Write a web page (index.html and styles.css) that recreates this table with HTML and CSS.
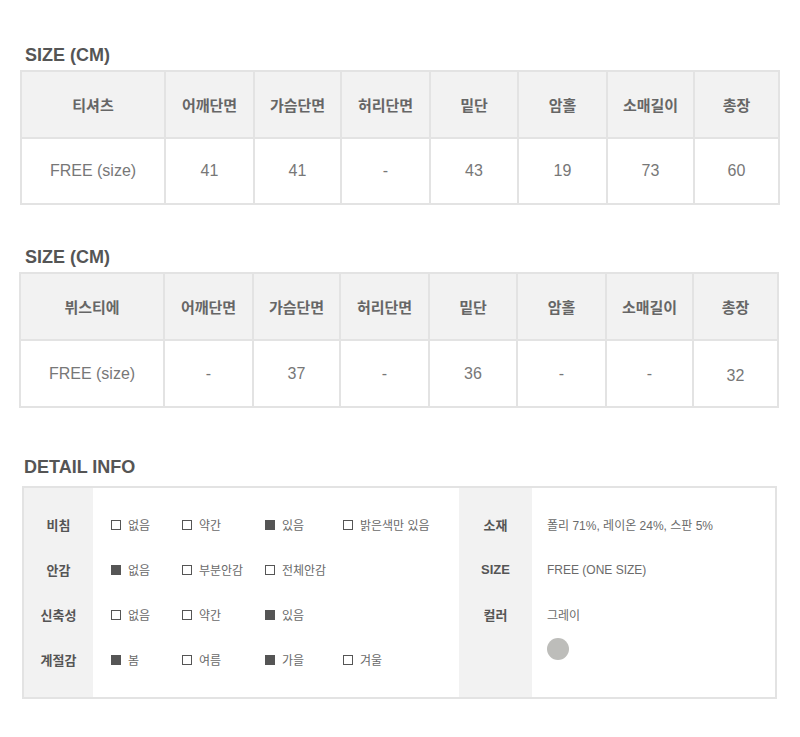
FILE: index.html
```html
<!DOCTYPE html>
<html lang="ko">
<head>
<meta charset="utf-8">
<link rel="stylesheet" href="styles.css">
</head>
<body>
<div class="page">
  <section class="size-block first">
    <h2 class="title">SIZE (CM)</h2>
    <table class="size-table">
      <colgroup>
        <col class="c-name"><col class="c89"><col class="c87"><col class="c89"><col class="c88"><col class="c89"><col class="c87"><col>
      </colgroup>
      <tr class="head">
        <th>티셔츠</th><th>어깨단면</th><th>가슴단면</th><th>허리단면</th><th>밑단</th><th>암홀</th><th>소매길이</th><th>총장</th>
      </tr>
      <tr class="body">
        <td>FREE (size)</td><td>41</td><td>41</td><td>-</td><td>43</td><td>19</td><td>73</td><td>60</td>
      </tr>
    </table>
  </section>

  <section class="size-block second">
    <h2 class="title">SIZE (CM)</h2>
    <table class="size-table">
      <colgroup>
        <col class="c-name"><col class="c89"><col class="c87"><col class="c89"><col class="c88"><col class="c89"><col class="c87"><col>
      </colgroup>
      <tr class="head">
        <th>뷔스티에</th><th>어깨단면</th><th>가슴단면</th><th>허리단면</th><th>밑단</th><th>암홀</th><th>소매길이</th><th>총장</th>
      </tr>
      <tr class="body">
        <td>FREE (size)</td><td>-</td><td>37</td><td>-</td><td>36</td><td>-</td><td>-</td><td class="low">32</td>
      </tr>
    </table>
  </section>

  <section class="detail">
    <h2 class="title">DETAIL INFO</h2>
    <div class="detail-box">
      <div class="labels">
        <div class="row">비침</div>
        <div class="row">안감</div>
        <div class="row">신축성</div>
        <div class="row">계절감</div>
      </div>
      <div class="options">
        <div class="row opts">
          <span class="opt"><i class="box"></i>없음</span>
          <span class="opt"><i class="box"></i>약간</span>
          <span class="opt"><i class="box on"></i>있음</span>
          <span class="opt"><i class="box"></i>밝은색만 있음</span>
        </div>
        <div class="row opts">
          <span class="opt"><i class="box on"></i>없음</span>
          <span class="opt"><i class="box"></i>부분안감</span>
          <span class="opt"><i class="box"></i>전체안감</span>
        </div>
        <div class="row opts">
          <span class="opt"><i class="box"></i>없음</span>
          <span class="opt"><i class="box"></i>약간</span>
          <span class="opt"><i class="box on"></i>있음</span>
        </div>
        <div class="row opts">
          <span class="opt"><i class="box on"></i>봄</span>
          <span class="opt"><i class="box"></i>여름</span>
          <span class="opt"><i class="box on"></i>가을</span>
          <span class="opt"><i class="box"></i>겨울</span>
        </div>
      </div>
      <div class="labels">
        <div class="row">소재</div>
        <div class="row latin">SIZE</div>
        <div class="row">컬러</div>
      </div>
      <div class="values">
        <div class="row">폴리 71%, 레이온 24%, 스판 5%</div>
        <div class="row">FREE (ONE SIZE)</div>
        <div class="row">그레이</div>
        <div class="swatch-row"><span class="swatch"></span></div>
      </div>
    </div>
  </section>
</div>
</body>
</html>
```

FILE: styles.css
```css
* { box-sizing: border-box; }
html, body {
  margin: 0;
  background: #fff;
}
body {
  font-family: "Liberation Sans", "Noto Sans CJK KR", sans-serif;
  color: #777;
}
.page {
  padding: 45px 20px 0 20px;
}
.title {
  margin: 0;
  font-size: 18px;
  line-height: 20px;
  font-weight: bold;
  color: #555;
  padding-left: 5px;
}
.size-block .title { margin-bottom: 5px; }
.size-block.second { margin-top: 42px; }
.size-block.second .title { margin-bottom: 5px; }
.size-block.second .size-table { margin-left: -1px; }
.size-block.second .size-table td { height: 67px; }

.size-table {
  width: 760px;
  border-collapse: separate;
  border-spacing: 0;
  border-top: 2px solid #e3e3e3;
  border-left: 2px solid #e3e3e3;
  table-layout: fixed;
}
.size-table th, .size-table td {
  border-right: 2px solid #e3e3e3;
  border-bottom: 2px solid #e3e3e3;
  text-align: center;
  padding: 0;
}
.c-name { width: 144px; }
.c89 { width: 89px; }
.c87 { width: 87px; }
.c88 { width: 88px; }
.size-table th {
  background: #f2f2f2;
  height: 67px;
  font-family: "Noto Sans CJK KR", sans-serif;
  font-size: 15px;
  font-weight: bold;
  color: #666;
}
.size-table td {
  height: 66px;
  font-size: 16px;
  color: #777;
  background: #fff;
}
.size-table td.low { padding-top: 5px; }

.detail { margin-top: 49px; }
.detail .title { padding-left: 4px; margin-bottom: 9px; }
.detail-box {
  margin-left: 2px;
  width: 755px;
  border: 2px solid #e3e3e3;
  display: grid;
  grid-template-columns: 69px 366px 73px 1fr;
}
.labels {
  background: #f2f2f2;
  padding: 14px 0 15px;
  font-family: "Noto Sans CJK KR", sans-serif;
  font-size: 13px;
  font-weight: bold;
  color: #555;
  text-align: center;
}
.labels .latin { font-family: "Liberation Sans", sans-serif; }
.row {
  height: 45px;
  display: flex;
  align-items: center;
  justify-content: center;
}
.options, .values {
  padding: 14px 0 15px;
  font-family: "Noto Sans CJK KR", sans-serif;
  font-size: 12px;
  color: #6a6a6a;
}
.options .row {
  justify-content: flex-start;
  padding-left: 18px;
  display: grid;
  grid-template-columns: 71px 83px 78px auto;
  align-items: center;
}
.opt {
  display: flex;
  align-items: center;
  white-space: nowrap;
}
.box {
  display: inline-block;
  width: 10px;
  height: 10px;
  border: 1.5px solid #555;
  margin-right: 7px;
}
.box.on { background: #555; }
.values { padding-left: 15px; }
.values .row {
  justify-content: flex-start;
  font-family: "Liberation Sans", "Noto Sans CJK KR", sans-serif;
}
.swatch-row {
  height: 30px;
  padding-top: 1px;
}
.swatch {
  display: block;
  width: 22px;
  height: 22px;
  border-radius: 50%;
  background: #bdbdba;
}
```
